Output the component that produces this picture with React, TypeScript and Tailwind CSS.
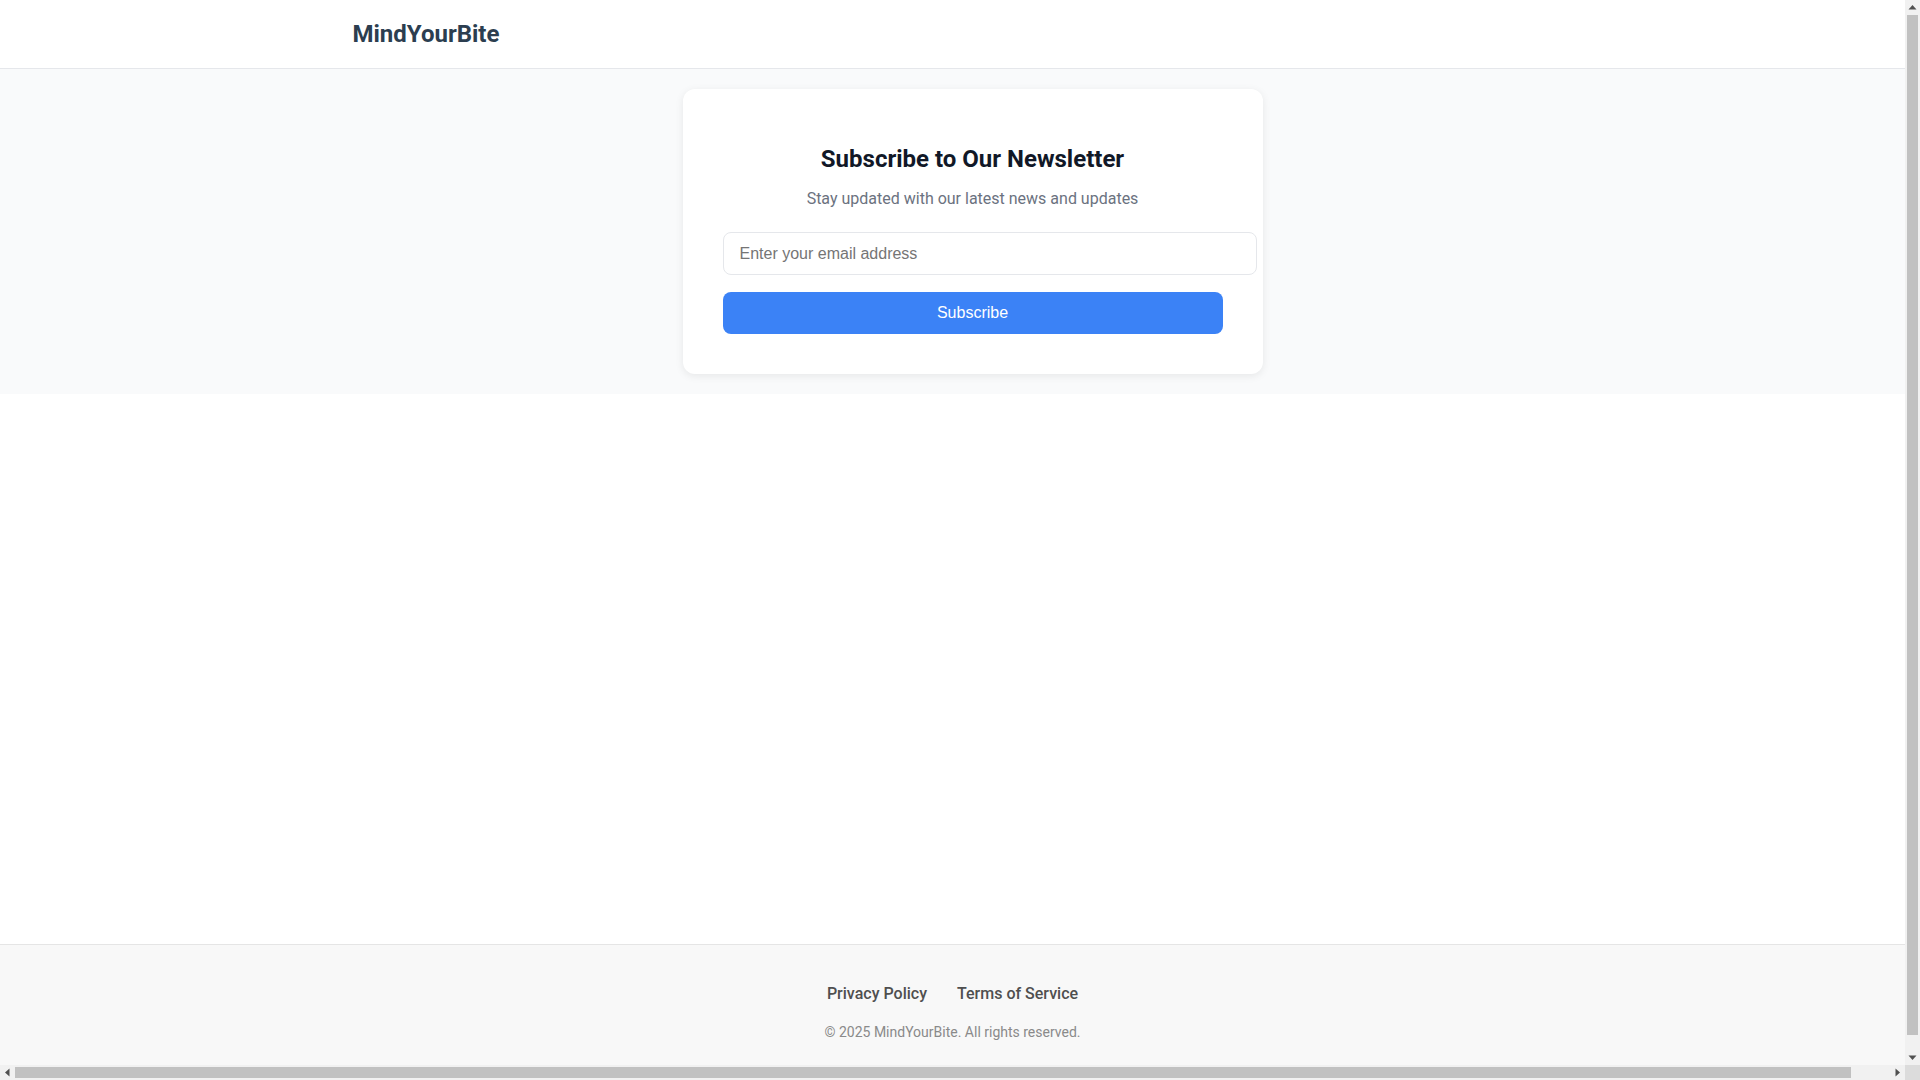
import React from "react";

function Tri({ dir }: { dir: "up" | "down" | "left" | "right" }) {
  const pts =
    dir === "up"
      ? "3.5,9.5 11.5,9.5 7.5,5"
      : dir === "down"
      ? "3.5,5.5 11.5,5.5 7.5,10"
      : dir === "left"
      ? "9.5,3.5 9.5,11.5 5,7.5"
      : "5.5,3.5 5.5,11.5 10,7.5";
  return (
    <svg width="15" height="15" viewBox="0 0 15 15" className="block">
      <polygon points={pts} fill="#505050" />
    </svg>
  );
}

export default function App() {
  return (
    <div className="w-[1905px] min-h-screen flex flex-col bg-white font-['Roboto',sans-serif]">
      <header className="h-[69px] border-b border-[#e5e7eb] bg-white flex items-center">
        <div className="w-[1200px] mx-auto">
          <span className="text-2xl font-bold text-[#2c3e50]">MindYourBite</span>
        </div>
      </header>

      <main className="flex-1">
        <section className="w-[1945px] bg-[#f9fafb] py-5 flex justify-center">
          <div className="w-[580px] bg-white rounded-xl shadow-[0_2px_8px_rgba(0,0,0,0.08)] px-10 pt-[54px] pb-10">
            <h2 className="text-2xl font-bold text-[#111827] text-center">Subscribe to Our Newsletter</h2>
            <p className="mt-3 text-base text-[#6b7280] text-center">Stay updated with our latest news and updates</p>
            <input
              type="email"
              placeholder="Enter your email address"
              className="mt-[21px] block w-[534px] h-[43px] px-4 border border-[#e5e7eb] rounded-lg bg-white text-base font-['Liberation_Sans',Arial,sans-serif] placeholder:text-[#757575] outline-none"
            />
            <button className="mt-[17px] w-full h-[42px] rounded-lg bg-[#3b82f6] text-white text-base font-['Liberation_Sans',Arial,sans-serif]">
              Subscribe
            </button>
          </div>
        </section>
      </main>

      <footer className="border-t border-[#e5e5e5] bg-[#f8f8f8] pt-[37px] pb-[38px]">
        <div className="flex justify-center gap-[30px]">
          <a className="text-base font-medium text-[#4f4f4f]">Privacy Policy</a>
          <a className="text-base font-medium text-[#4f4f4f]">Terms of Service</a>
        </div>
        <p className="mt-4 text-sm text-[#8a8a8a] text-center">© 2025 MindYourBite. All rights reserved.</p>
      </footer>

      {/* browser scrollbars as in the screenshot */}
      <div className="fixed top-0 right-0 w-[15px] h-[1065px] bg-[#f1f1f1] flex flex-col">
        <Tri dir="up" />
        <div className="flex-1 px-[2px]">
          <div className="w-full h-[1020px] bg-[#c1c1c1]" />
        </div>
        <Tri dir="down" />
      </div>
      <div className="fixed bottom-0 left-0 w-[1905px] h-[15px] bg-[#f1f1f1] flex">
        <Tri dir="left" />
        <div className="flex-1 py-[2px]">
          <div className="h-full w-[1836px] bg-[#c1c1c1]" />
        </div>
        <Tri dir="right" />
      </div>
      <div className="fixed bottom-0 right-0 w-[15px] h-[15px] bg-[#dcdcdc]" />
    </div>
  );
}
